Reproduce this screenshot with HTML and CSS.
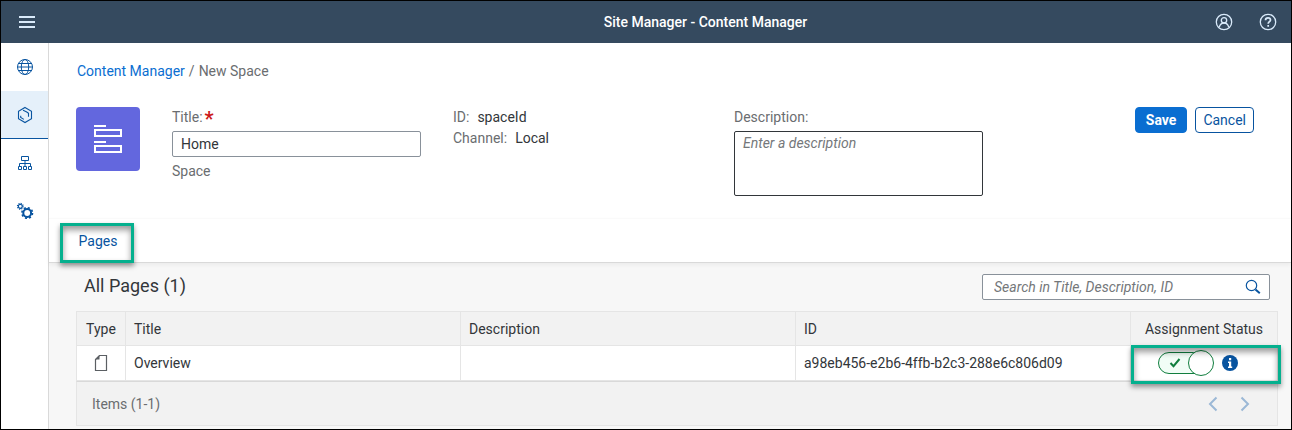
FILE: index.html
```html
<!DOCTYPE html>
<html lang="en">
<head>
<meta charset="utf-8">
<meta name="viewport" content="width=device-width, initial-scale=1">
<title>Site Manager - Content Manager</title>
<link rel="stylesheet" href="styles.css">
</head>
<body>
<div class="app">
  <header class="shell">
    <button class="shell-btn" type="button" aria-label="Menu">
      <svg width="18" height="14" viewBox="0 0 18 14" fill="#d9eafa"><path d="M1 1h16v2H1zM1 6h16v2H1zM1 11h16v2H1z"/></svg>
    </button>
    <h1 class="shell-title">Site Manager - Content Manager</h1>
    <div class="shell-actions">
      <button class="shell-btn" type="button" aria-label="User">
        <svg width="18" height="18" viewBox="0 0 18 18" fill="none" stroke="#d9eafa" stroke-width="1.3"><circle cx="9" cy="9" r="7.7"/><circle cx="9" cy="7.3" r="2.7"/><path d="M4.3 14.2c.6-2.8 2.3-4.2 4.7-4.2s4.1 1.4 4.7 4.2"/></svg>
      </button>
      <button class="shell-btn" type="button" aria-label="Help">
        <svg width="18" height="18" viewBox="0 0 18 18" fill="none" stroke="#d9eafa" stroke-width="1.3"><circle cx="9" cy="9" r="7.7"/><path stroke-width="1.7" d="M6.5 7.2C6.5 5.600 7.500 4.800 9 4.800s2.500.8 2.500 2.100c0 1.700-2.300 1.800-2.300 3.900M9.200 12v1.800"/></svg>
      </button>
    </div>
  </header>
  <div class="body">
    <nav class="side" aria-label="Main">
      <a class="side-item" href="#" aria-label="Sites">
        <svg width="18" height="18" viewBox="0 0 18 18" fill="none" stroke="#0854a0"><circle cx="9" cy="9" r="7.5"/><ellipse cx="9" cy="9" rx="3.7" ry="7.5"/><path d="M1.500 9h15M2.500 5.500h13M2.500 12.500h13"/></svg>
      </a>
      <a class="side-item selected" href="#" aria-label="Content" aria-current="page">
        <svg width="18" height="18" viewBox="0 0 18 18" fill="none" stroke="#0854a0" stroke-width="1.1"><path d="M9 1.500l6.500 3.700v7.600L9 16.500l-6.500-3.700V5.200z"/><path d="M7 4.300c2 1 3.200 1.200 5.500 2.900v3.500M4.700 9.800v1.700l3.200 1.900"/></svg>
      </a>
      <a class="side-item" href="#" aria-label="Channels">
        <svg width="18" height="18" viewBox="0 0 18 18" fill="none" stroke="#0854a0"><path d="M5.500 2.500h7v4h-7zM9 6.500v6M3.500 12.500v-3h11v3M2.500 12.500h3v3h-3zM7.500 12.500h3v3h-3zM12.500 12.500h3v3h-3z"/></svg>
      </a>
      <a class="side-item" href="#" aria-label="Settings">
        <svg width="18" height="18" viewBox="0 0 18 18" fill="none" stroke="#0854a0"><circle cx="4.300" cy="4.300" r="2" stroke-width="1.200"/><circle cx="4.300" cy="4.300" r="2.900" stroke-width="1.100" stroke-dasharray="1.140 1.140"/><circle cx="11.200" cy="11" r="3.900" stroke-width="2"/><circle cx="11.200" cy="11" r="5.300" stroke-width="1.600" stroke-dasharray="2.080 2.080"/></svg>
      </a>
    </nav>
    <main class="main">
      <section class="object">
        <nav class="crumbs" aria-label="Breadcrumb"><a href="#">Content Manager</a><span>/</span><span>New Space</span></nav>
        <div class="details">
          <div class="tile">
            <svg width="28" height="28" viewBox="0 0 28 28" fill="none" stroke="#fff" stroke-width="2"><path d="M0 1h12M0 17h12"/><rect x="1" y="5" width="26" height="6"/><rect x="1" y="21" width="26" height="6"/></svg>
          </div>
          <div class="field">
            <label for="title">Title:<span class="required">*</span></label>
            <input class="box" id="title" type="text" value="Home">
            <span class="kind">Space</span>
          </div>
          <dl class="field facts">
            <div><dt>ID:</dt><dd>spaceId</dd></div>
            <div><dt>Channel:</dt><dd>Local</dd></div>
          </dl>
          <div class="field">
            <label for="desc">Description:</label>
            <textarea class="box area" id="desc" placeholder="Enter a description"></textarea>
          </div>
          <div class="buttons">
            <button class="btn primary" type="button">Save</button>
            <button class="btn" type="button">Cancel</button>
          </div>
        </div>
      </section>
      <div class="tabs"><a class="tab" href="#pages">Pages</a></div>
      <section class="content" id="pages">
        <div class="toolbar">
          <h2>All Pages (1)</h2>
          <div class="search">
            <input type="search" aria-label="Search" placeholder="Search in Title, Description, ID">
            <button type="button" aria-label="Search">
              <svg width="16" height="16" viewBox="0 0 16 16" fill="none" stroke="#0854a0"><circle cx="6.500" cy="6.500" r="5.200" stroke-width="1.200"/><path stroke-width="2" d="M10.500 10.500l4.300 3.800"/></svg>
            </button>
          </div>
        </div>
        <table class="grid">
          <colgroup><col class="c-type"><col><col><col><col class="c-status"></colgroup>
          <thead><tr><th class="mid">Type</th><th>Title</th><th>Description</th><th>ID</th><th class="status">Assignment Status</th></tr></thead>
          <tbody><tr>
            <td class="mid"><svg class="doc" width="14" height="18" viewBox="0 0 14 18"><path d="M5.500 1.500h7v15H1.500V5.500z" fill="none" stroke="#5b5f63" stroke-width="1.200"/><path d="M5.500 1v4.500H1z" fill="#5b5f63"/></svg></td>
            <td>Overview</td><td></td><td>a98eb456-e2b6-4ffb-b2c3-288e6c806d09</td>
            <td class="status marked"><div class="state">
              <label class="switch"><input type="checkbox" checked aria-label="Assigned"><span class="track"><svg width="12" height="10" viewBox="0 0 12 10" fill="none" stroke="#107e3e" stroke-width="2"><path d="M1.500 5l3 3.200L10.500 1"/></svg></span><span class="knob"></span></label>
              <svg width="16" height="16" viewBox="0 0 16 16"><circle cx="8" cy="8" r="8" fill="#0854a0"/><path fill="#fff" d="M7 3h2.200v2.200H7zM6 6.500h3.200v5h1V13H6v-1.500h1V8H6z"/></svg>
            </div></td>
          </tr></tbody>
        </table>
        <div class="pager">
          <span>Items (1-1)</span>
          <div class="arrows">
            <button type="button" disabled aria-label="Previous"><svg width="10" height="16" viewBox="0 0 10 16" fill="none" stroke="#9bb8d6" stroke-width="2"><path d="M8.500 1.500L2 8l6.500 6.500"/></svg></button>
            <button type="button" disabled aria-label="Next"><svg width="10" height="16" viewBox="0 0 10 16" fill="none" stroke="#9bb8d6" stroke-width="2"><path d="M1.500 1.500L8 8l-6.500 6.500"/></svg></button>
          </div>
        </div>
      </section>
    </main>
  </div>
</div>
</body>
</html>
```

FILE: styles.css
```css
* { box-sizing: border-box; }
body, h1, h2, dl, dd { margin: 0; }
body, input, textarea, button {
  font-family: Roboto, "Noto Sans", sans-serif;
  font-size: 14px;
  color: #32363a;
}
a { text-decoration: none; }
button { padding: 0; border: 0; background: none; cursor: pointer; }
svg { display: block; }

.app {
  display: flex;
  flex-direction: column;
  min-height: 100vh;
  border: 1px solid #000;
  background: #fff;
}

.shell {
  display: grid;
  grid-template-columns: 1fr auto 1fr;
  align-items: center;
  height: 42px;
  padding: 0 8px 0 11px;
  background: #354a5f;
}
.shell-title { padding-left: 116px; font-size: 14px; font-weight: 500; color: #fff; }
.shell-actions { display: flex; gap: 14px; justify-content: flex-end; }
.shell-btn { display: grid; place-items: center; width: 30px; height: 36px; }

.body { display: flex; flex: 1; }
.side { width: 48px; flex: none; border-right: 1px solid #d9d9d9; }
.side-item { display: grid; place-items: center; height: 48px; }
.side-item.selected { background: #e5f0fa; border-bottom: 1px solid #0854a0; }

.main { display: flex; flex-direction: column; flex: 1; min-width: 0; background: #f7f7f7; }
.object { padding: 18px 37px 22px 27px; background: #fff; }
.crumbs { display: flex; gap: 4px; line-height: 20px; padding-left: 1px; color: #6a6d70; }
.crumbs a { color: #0a6ed1; }

.details { display: flex; gap: 32px; margin-top: 26px; }
.tile {
  display: grid;
  place-items: center;
  flex: none;
  width: 64px;
  height: 64px;
  border-radius: 4px;
  background: #6367de;
}
.field { display: flex; flex-direction: column; flex: 0 1 249px; min-width: 0; color: #6a6d70; }
.field label { display: flex; gap: 2px; height: 24px; line-height: 20px; color: #6a6d70; }
.required { font-size: 20px; font-weight: 700; line-height: 24px; color: #cc1919; }
.box {
  width: 100%;
  height: 26px;
  padding: 0 8px;
  border: 1px solid #89919a;
  border-radius: 2px;
  background: #fff;
}
.area { display: block; height: 65px; padding: 2px 8px; line-height: 18px; border-color: #32363a; resize: none; }
.kind { margin-top: 4px; line-height: 20px; }
::placeholder { font-style: italic; color: #74777a; opacity: 1; }
.facts { gap: 1px; }
.facts div { display: flex; gap: 8px; line-height: 20px; }
.facts dd { color: #32363a; }
.buttons { display: flex; gap: 8px; margin-left: auto; }
.btn {
  height: 26px;
  padding: 0 7px;
  border: 1px solid #0854a0;
  border-radius: 4px;
  background: #fff;
  color: #0854a0;
}
.btn.primary { padding: 0 10px; border-color: #0a6ed1; background: #0a6ed1; font-weight: 700; color: #fff; }

.tabs {
  display: flex;
  height: 45px;
  padding: 4px 11px 0;
  border-top: 1px solid #fafafa;
  border-bottom: 1px solid #d9d9d9;
  box-shadow: 0 2px 4px #0000000d;
  background: #fff;
}
.tab {
  display: grid;
  place-items: center;
  width: 74px;
  height: 40px;
  padding: 0 0 4px 2px;
  border: 3px solid #05b08e;
  box-shadow: 0 3px 5px #0006, inset 0 4px 6px #0006;
  color: #0854a0;
}

.content { padding: 11px 13px 3px 27px; }
.toolbar { display: flex; align-items: flex-start; justify-content: space-between; padding: 0 8px 11px; }
.toolbar h2 { font-size: 18px; font-weight: 400; line-height: 24px; }
.search { display: flex; align-items: center; width: 288px; height: 26px; padding-right: 8px; border: 1px solid #89919a; border-radius: 2px; background: #fff; }
.search input { flex: 1; min-width: 0; height: 24px; padding: 0 11px; border: 0; background: none; }

.grid { width: 100%; border-collapse: collapse; table-layout: fixed; }
.c-type { width: 49px; }
.c-status { width: 147px; }
.grid th, .grid td { height: 35px; padding: 0 8px; border: 1px solid #e5e5e5; text-align: left; font-weight: 400; background: #fff; }
.grid th { height: 34px; background: #f2f2f2; }
.grid .mid { padding: 0; text-align: center; }
.grid th.status { padding: 0; text-align: center; }
.doc { margin: 0 auto; }
.grid td.marked { position: relative; padding: 0; }
.marked::after {
  content: "";
  position: absolute;
  inset: -1px -4px -4px 0;
  border: 3px solid #05b08e;
  box-shadow: 0 3px 5px #0006, inset 0 4px 6px #0006;
  pointer-events: none;
}
.state { display: flex; align-items: center; gap: 8px; padding-left: 27px; }
.switch { position: relative; display: flex; align-items: center; width: 56px; height: 26px; }
.switch input { position: absolute; inset: 0; margin: 0; opacity: 0; }
.track { display: flex; align-items: center; width: 50px; height: 22px; padding-left: 10px; border: 1px solid #107e3e; border-radius: 11px; background: #f1fdf6; }
.knob { position: absolute; right: 0; width: 26px; height: 26px; border: 1px solid #107e3e; border-radius: 50%; background: #fff; }

.pager {
  display: flex;
  align-items: center;
  justify-content: space-between;
  height: 45px;
  padding: 0 27px 0 15px;
  border: 1px solid #e5e5e5;
  border-top-color: #d9d9d9;
  background: #f2f2f2;
  color: #6a6d70;
}
.arrows { display: flex; gap: 22px; }
```
